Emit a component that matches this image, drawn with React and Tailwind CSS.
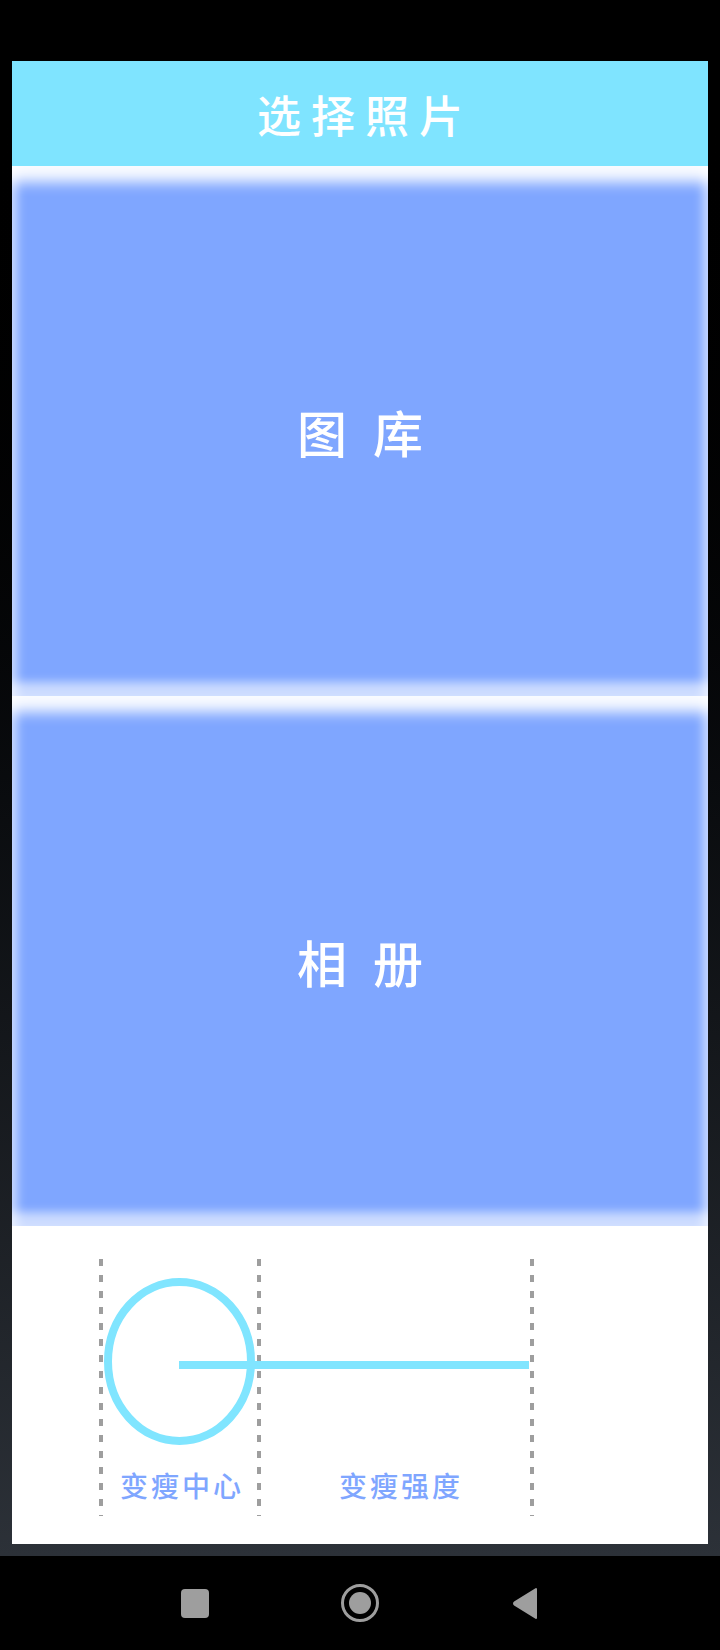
import React from 'react';

const cjk = "font-['Noto_Sans_CJK_SC','Noto_Sans',sans-serif]";

const Panel = ({ label }) => (
  <button className="h-[530px] w-full flex items-center justify-center bg-[#7fa6ff] shadow-[inset_0_24px_14px_-8px_rgba(255,255,255,0.95),inset_0_-26px_10px_-12px_rgba(255,255,255,0.6),inset_12px_0_10px_-6px_rgba(255,255,255,0.5),inset_-12px_0_10px_-6px_rgba(255,255,255,0.5)]">
    <span className={`${cjk} text-white text-[50px] font-medium leading-none tracking-[26px] pl-[26px]`}>{label}</span>
  </button>
);

const SlimDiagram = () => (
  <svg width="696" height="318" viewBox="0 0 696 318">
    {[89, 247, 520].map((x) => (
      <line key={x} x1={x} y1="33" x2={x} y2="290" stroke="#9e9e9e" strokeWidth="4" strokeDasharray="7 9" />
    ))}
    <ellipse cx="167.5" cy="135.5" rx="71.5" ry="79.5" fill="none" stroke="#80e5ff" strokeWidth="8" />
    <line x1="167" y1="139" x2="517" y2="139" stroke="#80e5ff" strokeWidth="8" />
    <text x="170" y="259" textAnchor="middle" dominantBaseline="central" fill="#7fa6ff" fontSize="28" fontWeight="500" letterSpacing="3" fontFamily="'Noto Sans CJK SC', sans-serif">变瘦中心</text>
    <text x="389" y="259" textAnchor="middle" dominantBaseline="central" fill="#7fa6ff" fontSize="28" fontWeight="500" letterSpacing="3" fontFamily="'Noto Sans CJK SC', sans-serif">变瘦强度</text>
  </svg>
);

export default function App() {
  return (
    <div className="w-[720px] h-[1650px] flex flex-col bg-black">
      {/* status bar */}
      <div className="h-[61px] bg-black" />

      {/* content */}
      <div className="flex-1 flex flex-col px-[12px] bg-gradient-to-b from-black to-[#2c3138]">
        <div className="h-[105px] flex items-center justify-center bg-[#7fe4ff]">
          <span className={`${cjk} text-white text-[44px] font-medium leading-none tracking-[10px] pl-[10px]`}>选择照片</span>
        </div>
        <Panel label="图库" />
        <Panel label="相册" />
        <div className="h-[318px] bg-white">
          <SlimDiagram />
        </div>
        <div className="h-[12px]" />
      </div>

      {/* nav bar */}
      <div className="h-[94px] bg-black flex items-center justify-center">
        <div className="w-[130px] flex justify-center ml-[35px]">
          <div className="w-[28px] h-[29px] rounded-[4px] bg-[#9e9e9e]" />
        </div>
        <div className="w-[200px] flex justify-center">
          <div className="w-[38px] h-[38px] rounded-full border-[3px] border-[#9e9e9e] flex items-center justify-center">
            <div className="w-[22px] h-[22px] rounded-full bg-[#9e9e9e]" />
          </div>
        </div>
        <div className="w-[130px] flex justify-center mr-[35px]">
          <svg width="26" height="33" viewBox="0 0 26 33">
            <path d="M24 2 L24 31 L3 18 Q1 16.5 3 15 Z" fill="#9e9e9e" stroke="#9e9e9e" strokeWidth="2" strokeLinejoin="round" />
          </svg>
        </div>
      </div>
    </div>
  );
}
